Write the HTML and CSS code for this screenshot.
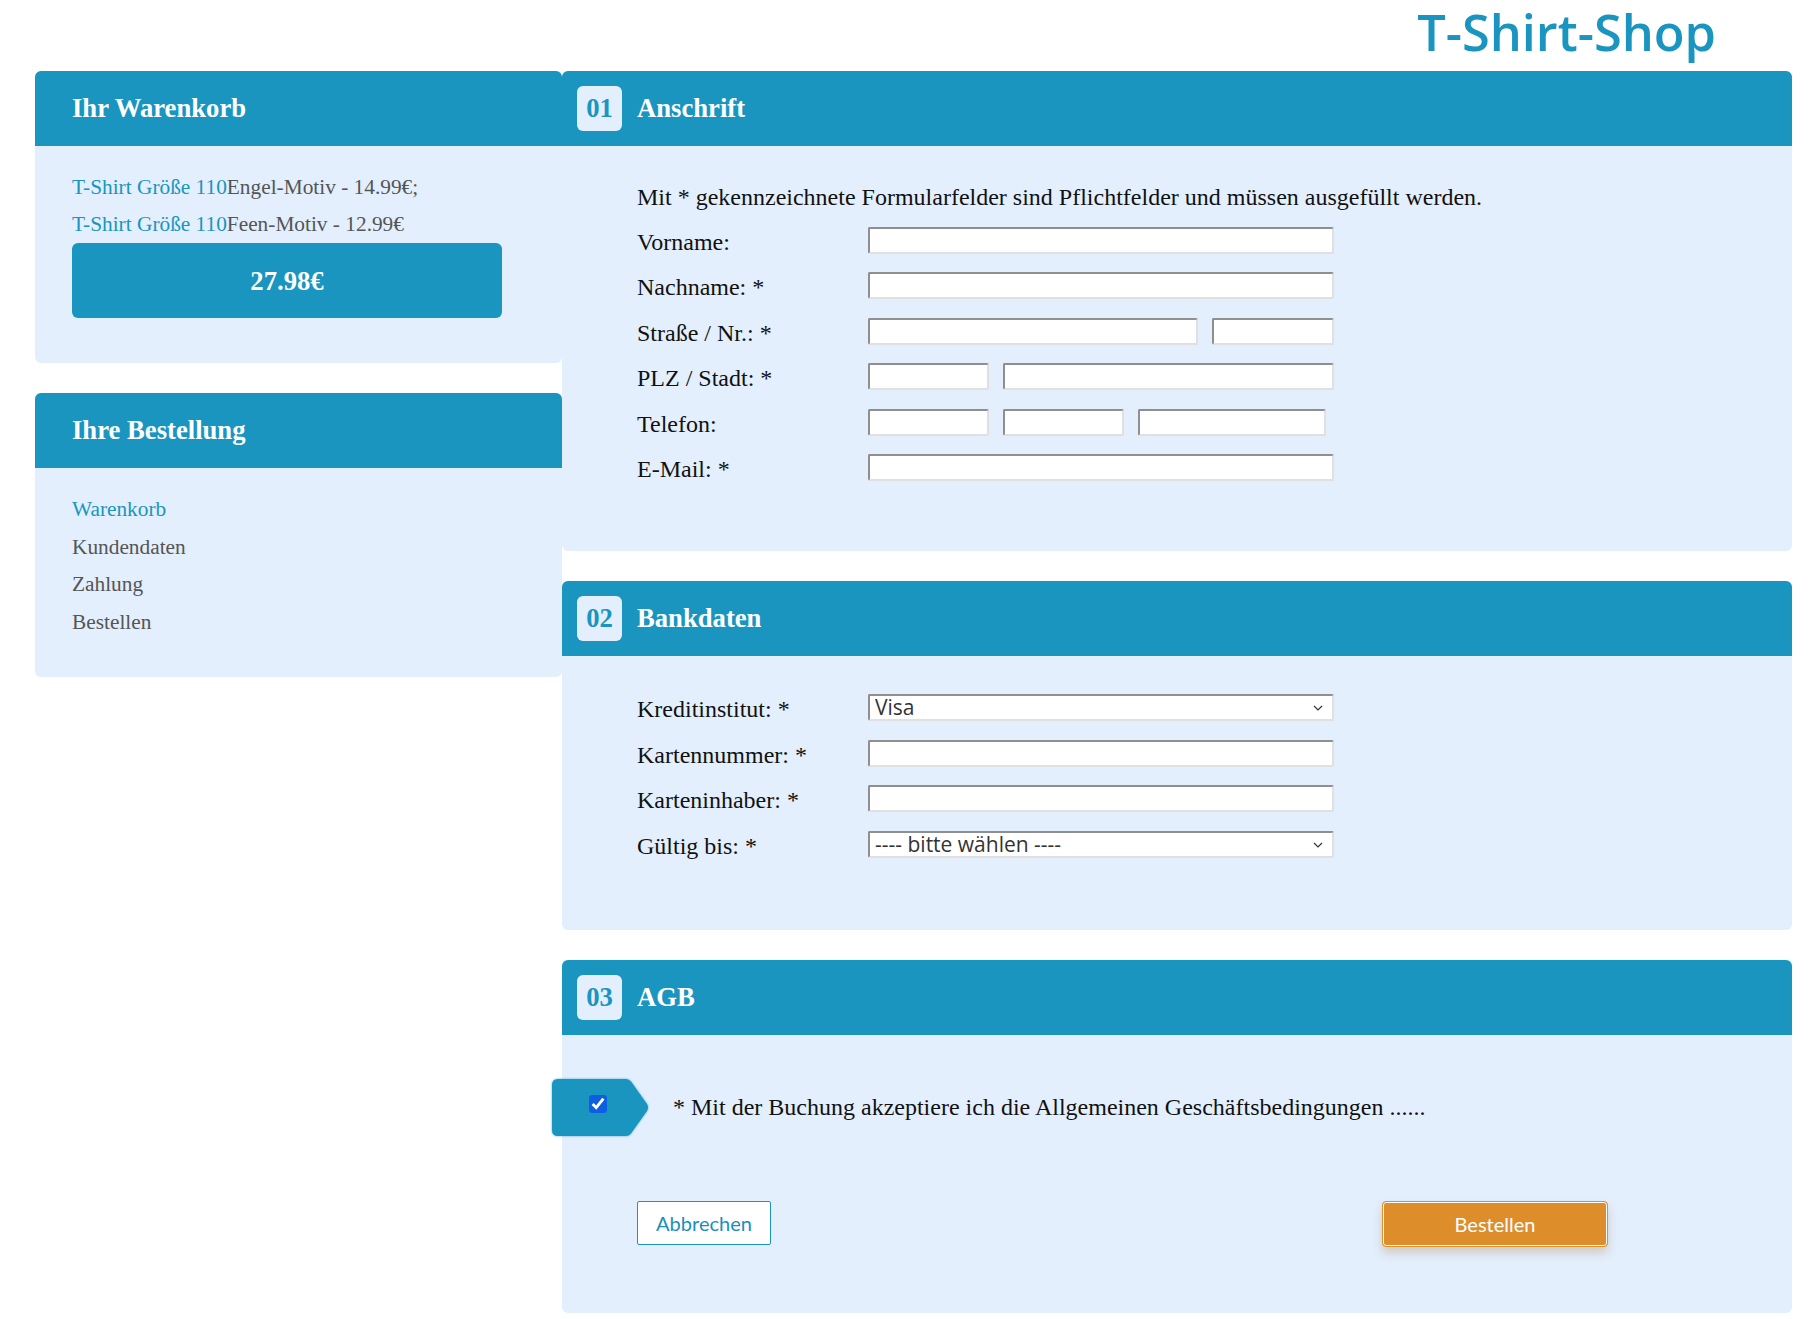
FILE: index.html
```html
<!DOCTYPE html>
<html lang="de">
<head>
<meta charset="utf-8">
<title>T-Shirt-Shop</title>
<link rel="stylesheet" href="styles.css">
</head>
<body>
<header class="top">
  <h1 class="brand">T-Shirt-Shop</h1>
</header>
<div class="layout">
  <aside class="sidebar">
    <section class="card">
      <h2 class="card-head">Ihr Warenkorb</h2>
      <div class="card-body cart">
        <p class="cart-item"><span class="prod">T-Shirt Größe 110</span>Engel-Motiv - 14.99€;</p>
        <p class="cart-item"><span class="prod">T-Shirt Größe 110</span>Feen-Motiv - 12.99€</p>
        <div class="total">27.98€</div>
      </div>
    </section>
    <section class="card">
      <h2 class="card-head">Ihre Bestellung</h2>
      <ul class="card-body steps">
        <li class="active">Warenkorb</li>
        <li>Kundendaten</li>
        <li>Zahlung</li>
        <li>Bestellen</li>
      </ul>
    </section>
  </aside>
  <main class="main">
    <section class="card">
      <h2 class="card-head step-head"><span class="num">01</span>Anschrift</h2>
      <div class="form-body addr">
        <p class="row intro">Mit * gekennzeichnete Formularfelder sind Pflichtfelder und müssen ausgefüllt werden.</p>
        <div class="row"><label class="lbl">Vorname:</label><div class="fields"><input class="in w-full" type="text"></div></div>
        <div class="row"><label class="lbl">Nachname: *</label><div class="fields"><input class="in w-full" type="text"></div></div>
        <div class="row"><label class="lbl">Straße / Nr.: *</label><div class="fields"><input class="in w-street" type="text"><input class="in w-nr" type="text"></div></div>
        <div class="row"><label class="lbl">PLZ / Stadt: *</label><div class="fields"><input class="in w-plz" type="text"><input class="in w-city" type="text"></div></div>
        <div class="row"><label class="lbl">Telefon:</label><div class="fields"><input class="in w-plz" type="text"><input class="in w-plz" type="text"><input class="in w-tel" type="text"></div></div>
        <div class="row"><label class="lbl">E-Mail: *</label><div class="fields"><input class="in w-full" type="text"></div></div>
      </div>
    </section>
    <section class="card">
      <h2 class="card-head step-head"><span class="num">02</span>Bankdaten</h2>
      <div class="form-body bank">
        <div class="row"><label class="lbl">Kreditinstitut: *</label><div class="fields"><span class="sel-wrap"><select class="in sel w-full"><option>Visa</option><option>Mastercard</option></select><svg class="chev" width="10" height="6" viewBox="0 0 10 6" aria-hidden="true"><path d="M1 1L5 5L9 1" fill="none" stroke="#333" stroke-width="1.2"/></svg></span></div></div>
        <div class="row"><label class="lbl">Kartennummer: *</label><div class="fields"><input class="in w-full" type="text"></div></div>
        <div class="row"><label class="lbl">Karteninhaber: *</label><div class="fields"><input class="in w-full" type="text"></div></div>
        <div class="row"><label class="lbl">Gültig bis: *</label><div class="fields"><span class="sel-wrap"><select class="in sel w-full"><option>---- bitte wählen ----</option></select><svg class="chev" width="10" height="6" viewBox="0 0 10 6" aria-hidden="true"><path d="M1 1L5 5L9 1" fill="none" stroke="#333" stroke-width="1.2"/></svg></span></div></div>
      </div>
    </section>
    <section class="card">
      <h2 class="card-head step-head"><span class="num">03</span>AGB</h2>
      <div class="form-body agb">
        <div class="agree">
          <div class="tag">
            <svg class="tag-shape" width="97" height="57" viewBox="0 0 97 57" aria-hidden="true"><path d="M6 0H74Q77 0 79 2.5L95 25Q97 28.5 95 32L79 54.5Q77 57 74 57H6Q0 57 0 51V6Q0 0 6 0Z" fill="#1995bf"/></svg>
            <input class="check" type="checkbox" checked>
          </div>
          <span class="agree-text">* Mit der Buchung akzeptiere ich die Allgemeinen Geschäftsbedingungen ......</span>
        </div>
        <div class="actions">
          <button class="btn btn-cancel" type="button">Abbrechen</button>
          <button class="btn btn-order" type="button">Bestellen</button>
        </div>
      </div>
    </section>
  </main>
</div>
</body>
</html>
```

FILE: styles.css
```css
* { box-sizing: border-box; }

html, body {
  margin: 0;
  padding: 0;
  background: #ffffff;
}

body {
  font-family: "Liberation Serif", "Times New Roman", serif;
  font-size: 21.33px;
  color: #111;
}

.top {
  height: 71px;
  display: flex;
  justify-content: flex-end;
  padding-right: 97px;
}

.brand {
  margin: 0;
  font-family: "Open Sans", "Noto Sans", sans-serif;
  font-weight: 600;
  font-size: 50.5px;
  line-height: 64px;
  color: #1995bf;
}

.layout {
  display: flex;
  align-items: flex-start;
  padding: 0 21px 0 35px;
}

.sidebar {
  width: 527px;
  flex: none;
  display: flex;
  flex-direction: column;
  gap: 30px;
}

.main {
  flex: 1;
  display: flex;
  flex-direction: column;
  gap: 30.5px;
}

.card {
  background: #e3effd;
  border-radius: 6px;
}

.card-head {
  margin: 0;
  height: 75px;
  background: #1995bf;
  color: #fff;
  font-size: 26.67px;
  font-weight: bold;
  line-height: 75px;
  padding-left: 37px;
  border-radius: 6px 6px 0 0;
}

.step-head {
  display: flex;
  align-items: center;
  gap: 15px;
  padding-left: 15px;
}

.num {
  width: 45px;
  height: 45px;
  border-radius: 6px;
  background: #e3effd;
  color: #1995bf;
  text-align: center;
  line-height: 45px;
}

/* sidebar */
.card-body {
  margin: 0;
  padding: 23px 60px 45px 37px;
}

.cart-item {
  margin: 0;
  line-height: 37px;
  color: #555;
}

.prod { color: #1995bf; }

.total {
  height: 75px;
  width: 430px;
  border-radius: 6px;
  background: #1995bf;
  color: #fff;
  font-weight: bold;
  font-size: 26.67px;
  line-height: 76px;
  text-align: center;
}

.steps {
  list-style: none;
  padding-bottom: 36px;
}

.steps li {
  line-height: 37.5px;
  color: #555;
}

.steps li.active { color: #1995bf; }

/* forms */
.form-body {
  display: flex;
  flex-direction: column;
  gap: 18.4px;
  padding: 35.6px 0 70px 75px;
  font-size: 24px;
}

.form-body.bank { padding-top: 38px; padding-bottom: 72px; }

.row {
  margin: 0;
  height: 27px;
  display: flex;
  align-items: center;
  white-space: nowrap;
}

.intro { padding-top: 4px; }

.lbl {
  width: 231px;
  flex: none;
  padding-top: 4px;
  color: #111;
}

.fields {
  display: flex;
  gap: 14px;
}

.in {
  height: 27px;
  margin: 0;
  background: #fff;
  border-style: solid;
  border-width: 2px;
  border-color: #8f8f8f #e0e0e0 #e0e0e0 #8f8f8f;
  border-radius: 2px;
  padding: 0 6px;
  font-family: "Open Sans", "Noto Sans", sans-serif;
  font-size: 21px;
  color: #222;
}

.sel-wrap {
  position: relative;
  display: flex;
}

.sel {
  appearance: none;
  -webkit-appearance: none;
  padding: 0 24px 0 5px;
  line-height: 23px;
  color: #333;
}

.chev {
  position: absolute;
  right: 11px;
  top: 11px;
  pointer-events: none;
}

.w-full { width: 466px; }
.w-street { width: 330px; }
.w-nr { width: 122px; }
.w-plz { width: 121px; }
.w-city { width: 331px; }
.w-tel { width: 188px; }

/* AGB */
.form-body.agb {
  gap: 0;
  padding: 44px 184px 66px 0;
}

.agree {
  display: flex;
  align-items: center;
  gap: 24px;
  margin-left: -10px;
  height: 57px;
}

.tag {
  width: 97px;
  height: 57px;
  flex: none;
  display: flex;
  align-items: flex-start;
  padding: 16px 0 0 37px;
  position: relative;
}

.tag-shape {
  position: absolute;
  left: 0;
  top: 0;
  filter: drop-shadow(0 0 1px rgba(25, 149, 191, 0.7));
}

.check {
  position: relative;
  margin: 0;
  width: 18px;
  height: 18px;
  accent-color: #0b5fe0;
}

.agree-text {
  white-space: nowrap;
}

.actions {
  display: flex;
  justify-content: space-between;
  align-items: flex-start;
  margin-top: 65px;
  padding-left: 75px;
}

.btn {
  font-family: Lato, "Open Sans", sans-serif;
  font-size: 20px;
  cursor: pointer;
}

.btn-cancel {
  width: 134px;
  height: 44px;
  background: #fff;
  border: 1px solid #1995bf;
  border-radius: 2px;
  color: #1a8fba;
}

.btn-order {
  width: 226px;
  height: 46px;
  background: #dd8e2b;
  border: 1px solid #e08f2c;
  border-radius: 4px;
  color: #fff;
  box-shadow: inset 0 0 0 1px #ffffff, 0 6px 10px rgba(170, 120, 60, 0.3);
}
```
